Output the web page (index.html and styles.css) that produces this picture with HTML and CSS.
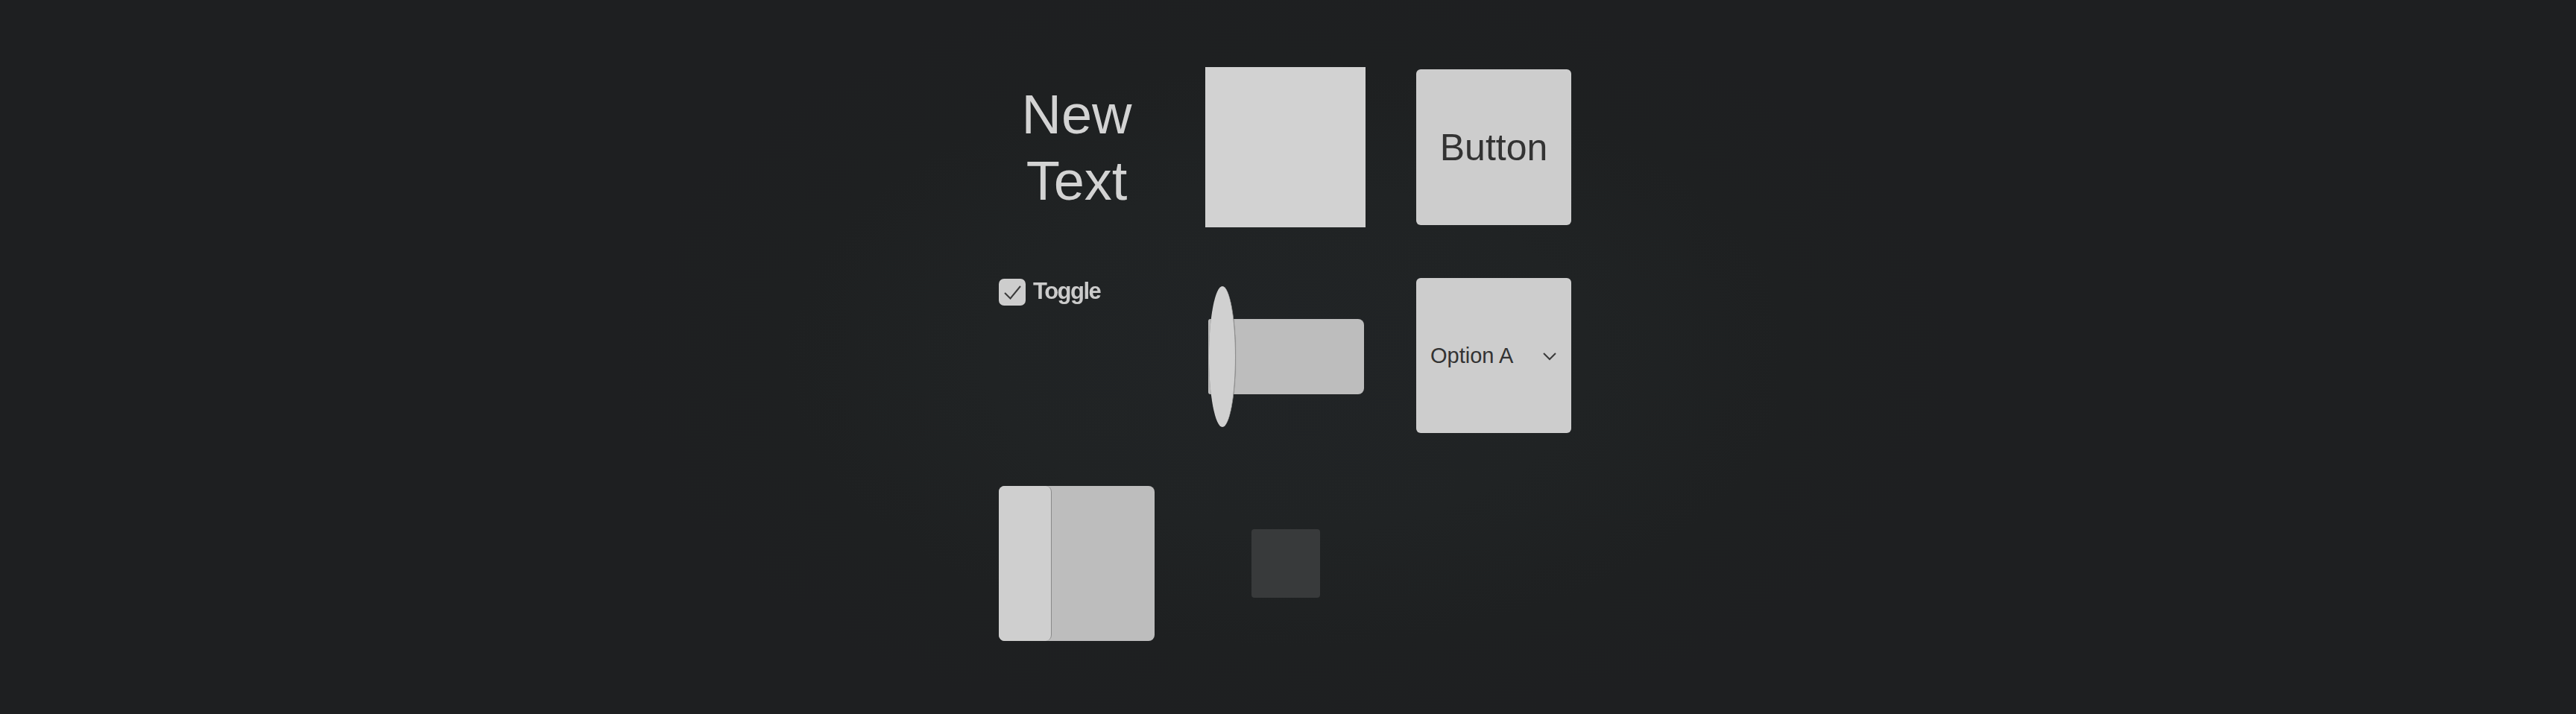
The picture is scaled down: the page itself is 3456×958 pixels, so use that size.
FILE: index.html
```html
<!DOCTYPE html>
<html>

<head>
  <meta charset="UTF-8">
  <title>UI Sample</title>
  <link rel="stylesheet" href="styles.css">
</head>

<body>

  <div class="canvas">
    <div class="cell textCell">
      <div class="bigText">New<br>Text</div>
    </div>

    <div class="cell">
      <div class="image"></div>
    </div>

    <div class="cell">
      <div class="button">Button</div>
    </div>

    <div class="cell toggleCell">
      <div class="toggle">
        <span class="checkbox">
          <svg width="36" height="36" viewBox="0 0 36 36">
            <path d="M8 19 L15.5 26.5 L29 10" fill="none" stroke="#3a3a3a" stroke-width="2" />
          </svg>
        </span>
        <span class="toggleLabel">Toggle</span>
      </div>
    </div>

    <div class="cell">
      <div class="slider">
        <div class="sliderTrack"></div>
        <div class="sliderHandle"></div>
      </div>
    </div>

    <div class="cell">
      <div class="dropdown">
        <span>Option A</span>
        <svg width="20" height="12" viewBox="0 0 20 12">
          <path d="M2 2 L10 10 L18 2" fill="none" stroke="#3a3a3a" stroke-width="2" />
        </svg>
      </div>
    </div>

    <div class="cell">
      <div class="scrollbar">
        <div class="scrollHandle"></div>
      </div>
    </div>

    <div class="cell">
      <div class="panel"></div>
    </div>

    <div class="cell"></div>
  </div>

</body>

</html>
```

FILE: styles.css
```css
:root {
  --bg: #1f2122;
  --light: #d1d1d1;
  --mid: #cdcdcd;
  --track: #bdbdbd;
  --ink: #333;
}

body {
  margin: 0;
  height: 958px;
  overflow: hidden;
  background-color: var(--bg);
  background-image: radial-gradient(ellipse 900px 520px at 50% 50%, #212426 0%, #202324 45%, #1e2021 75%, #1e1f21 100%);
  font-family: 'Liberation Sans', Arial, sans-serif;

  display: flex;
  justify-content: center;
  padding-top: 90px;
  padding-right: 8px;
  box-sizing: border-box;
}

.canvas {
  display: grid;
  grid-template-columns: 209px 215px 208px;
  grid-template-rows: 215px 211px 208px;
  column-gap: 68px;
  row-gap: 68px;
}

.cell {
  display: flex;
  justify-content: center;
  align-items: center;
}

.bigText {
  color: #d3d3d3;
  font-size: 74px;
  line-height: 89px;
  text-align: center;
}

.image {
  width: 215px;
  height: 215px;
  background-color: #d2d2d2;
  box-shadow: 0 0 40px 12px rgba(255, 255, 255, 0.012);
}

.button {
  width: 208px;
  height: 209px;
  border-radius: 6px;
  background-color: var(--mid);
  color: var(--ink);
  font-size: 50px;
  display: flex;
  justify-content: center;
  align-items: center;
  box-shadow: 0 0 40px 12px rgba(255, 255, 255, 0.012);
}

.toggleCell {
  align-items: flex-start;
  justify-content: flex-start;
}

.toggle {
  display: flex;
  align-items: center;
  gap: 10px;
}

.checkbox {
  width: 36px;
  height: 36px;
  border-radius: 7px;
  background-color: var(--mid);
  display: block;
}

.checkbox svg {
  display: block;
}

.toggleLabel {
  color: #cbcbcb;
  font-weight: bold;
  font-size: 31px;
  letter-spacing: -1.5px;
  filter: blur(0.5px);
  padding-bottom: 2px;
}

.slider {
  position: relative;
  width: 209px;
  height: 190px;
  display: flex;
  align-items: center;
  margin-left: 2px;
}

.sliderTrack {
  width: 209px;
  height: 101px;
  background-color: var(--track);
  border-radius: 3px 8px 8px 3px;
}

.sliderHandle {
  position: absolute;
  left: 1px;
  top: 0;
  width: 35px;
  height: 189px;
  border-radius: 50%;
  background-color: #d0d0d0;
  border-right: 1px solid #8e8e8e;
  box-shadow: 0 0 1px rgba(0, 0, 0, 0.4);
}

.dropdown {
  width: 208px;
  height: 208px;
  border-radius: 6px;
  background-color: var(--mid);
  color: var(--ink);
  font-size: 29px;
  display: flex;
  align-items: center;
  justify-content: space-between;
  padding: 0 19px 0 19px;
  box-sizing: border-box;
  align-self: flex-start;
}

.dropdown svg {
  margin-top: 2px;
}

.scrollbar {
  width: 209px;
  height: 208px;
  border-radius: 8px;
  background-color: var(--track);
  display: flex;
}

.scrollHandle {
  width: 70px;
  height: 100%;
  border-radius: 8px;
  background-color: #cfcfcf;
  border-right: 1px solid #8a8a8a;
}

.panel {
  width: 92px;
  height: 92px;
  border-radius: 4px;
  background-color: #383a3b;
}
```
